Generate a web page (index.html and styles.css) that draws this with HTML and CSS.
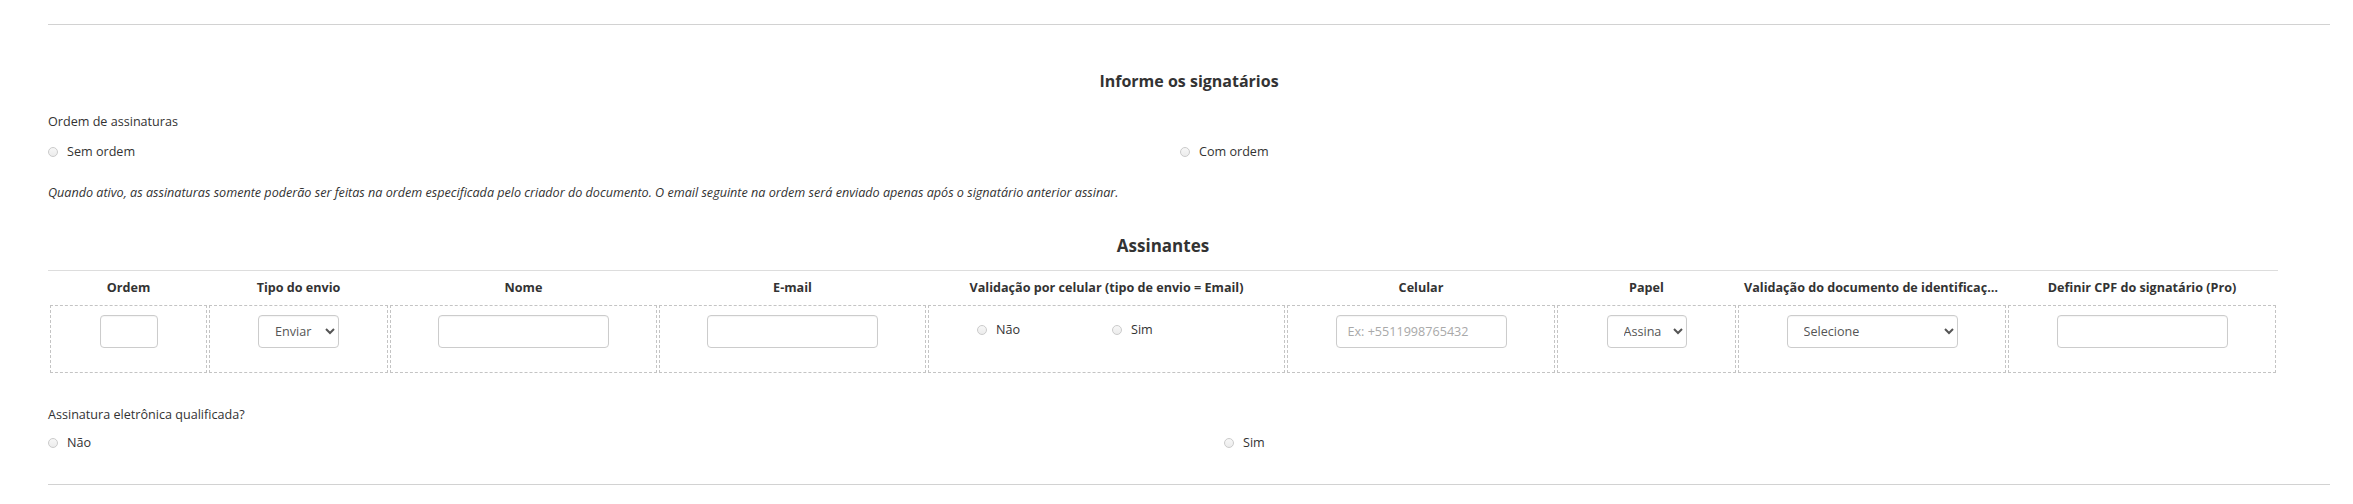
FILE: index.html
```html
<!DOCTYPE html>
<html lang="pt-BR">
<head>
<meta charset="utf-8">
<title>Informe os signatários</title>
<link rel="stylesheet" href="styles.css">
</head>
<body>
<div class="page">
  <div class="rule"></div>
  <h2 class="title">Informe os signatários</h2>
  <div class="field-label">Ordem de assinaturas</div>
  <div class="radio-row order-row">
    <label class="radio"><input type="radio" name="ordem"><span>Sem ordem</span></label>
    <label class="radio"><input type="radio" name="ordem"><span>Com ordem</span></label>
  </div>
  <p class="note">Quando ativo, as assinaturas somente poderão ser feitas na ordem especificada pelo criador do documento. O email seguinte na ordem será enviado apenas após o signatário anterior assinar.</p>

  <section class="signers">
    <h3 class="subtitle">Assinantes</h3>
    <div class="table-wrap">
      <table class="signers-table">
        <thead>
          <tr>
            <th class="c-ordem">Ordem</th>
            <th class="c-tipo">Tipo do envio</th>
            <th class="c-nome">Nome</th>
            <th class="c-email">E-mail</th>
            <th class="c-valid">Validação por celular (tipo de envio = Email)</th>
            <th class="c-cel">Celular</th>
            <th class="c-papel">Papel</th>
            <th class="c-doc">Validação do documento de identificação</th>
            <th class="c-cpf">Definir CPF do signatário (Pro)</th>
          </tr>
        </thead>
        <tbody>
          <tr>
            <td><div class="form-group"><input class="control w-ordem" type="text"></div></td>
            <td><div class="form-group"><select class="control w-tipo"><option>Enviar</option></select></div></td>
            <td><div class="form-group"><input class="control w-std" type="text"></div></td>
            <td><div class="form-group"><input class="control w-std" type="email"></div></td>
            <td class="valid-cell">
              <div class="radio-pair">
                <label class="radio pair-first"><input type="radio" name="cel"><span>Não</span></label>
                <label class="radio"><input type="radio" name="cel"><span>Sim</span></label>
              </div>
            </td>
            <td><div class="form-group"><input class="control w-std" type="text" placeholder="Ex: +5511998765432"></div></td>
            <td><div class="form-group"><select class="control w-papel"><option>Assinar</option></select></div></td>
            <td><div class="form-group"><select class="control w-std"><option>Selecione</option></select></div></td>
            <td><div class="form-group"><input class="control w-std" type="text"></div></td>
          </tr>
        </tbody>
      </table>
    </div>
  </section>

  <div class="field-label qual-label">Assinatura eletrônica qualificada?</div>
  <div class="radio-row qual-row">
    <label class="radio"><input type="radio" name="qual"><span>Não</span></label>
    <label class="radio"><input type="radio" name="qual"><span>Sim</span></label>
  </div>
  <div class="rule bottom-rule"></div>
</div>
</body>
</html>
```

FILE: styles.css
```css
html, body {
  margin: 0;
  padding: 0;
  background: #ffffff;
}

body {
  font-family: "Open Sans", "Liberation Sans", sans-serif;
  font-size: 12.6px;
  line-height: 18px;
  color: #333333;
}

.page {
  width: 2282px;
  padding: 24px 0 0 48px;
}

.rule {
  height: 1px;
  background: #d2d2d2;
}

.title {
  margin: 45px 0 0;
  font-size: 16px;
  line-height: 22px;
  font-weight: 700;
  text-align: center;
  color: #333333;
}

.field-label {
  margin-top: 21px;
}

.radio-row {
  display: flex;
  margin-top: 12px;
  height: 18px;
}

.order-row .radio:first-child {
  width: 1132px;
}

.qual-label {
  margin-top: 31px;
}

.qual-row {
  margin-top: 10px;
}

.qual-row .radio:first-child {
  width: 1176px;
}

.radio {
  display: flex;
  align-items: center;
  gap: 9px;
  height: 18px;
}

.radio input {
  appearance: none;
  -webkit-appearance: none;
  width: 10px;
  height: 10px;
  margin: 0;
  border: 1px solid #cbcbcb;
  border-radius: 50%;
  background: linear-gradient(#f7f7f7, #ececec);
  box-sizing: border-box;
  flex: none;
}

.note {
  margin: 23px 0 0;
  font-style: italic;
}

.signers {
  width: 2230px;
  margin-top: 32px;
}

.subtitle {
  margin: 0;
  font-size: 17px;
  line-height: 24px;
  font-weight: 700;
  text-align: center;
  color: #333333;
}

.table-wrap {
  margin-top: 12px;
  border-top: 1px solid #dddddd;
}

.signers-table {
  width: 2230px;
  table-layout: fixed;
  border-collapse: separate;
  border-spacing: 2px;
}

.signers-table th {
  box-sizing: border-box;
  height: 30px;
  padding: 6px 6px;
  font-weight: 700;
  text-align: center;
  white-space: nowrap;
  overflow: hidden;
  text-overflow: ellipsis;
  color: #333333;
}

.c-ordem { width: 157px; }
.c-tipo { width: 179px; }
.c-nome { width: 267px; }
.c-email { width: 267px; }
.c-valid { width: 357px; }
.c-cel { width: 268px; }
.c-papel { width: 179px; }
.c-doc { width: 268px; }
.c-cpf { width: 268px; }

.signers-table td {
  box-sizing: border-box;
  height: 66px;
  padding: 9px 8px;
  border: 1px dashed #c4c4c4;
  text-align: center;
  vertical-align: top;
}

.form-group {
  margin-bottom: 15px;
  display: flex;
  justify-content: center;
}

.control {
  box-sizing: border-box;
  height: 33px;
  margin: 0;
  padding: 5px 11px;
  border: 1px solid #cccccc;
  border-radius: 4px;
  background: #ffffff;
  font-family: "Open Sans", "Liberation Sans", sans-serif;
  font-size: 12.6px;
  color: #555555;
  box-shadow: inset 0 1px 1px rgba(0, 0, 0, 0.04);
}

select.control {
  padding: 5px 6px 5px 12px;
}

select.w-papel {
  padding-right: 9px;
}

.control::placeholder {
  color: #a9a9a9;
}

.w-ordem { width: 58px; }
.w-tipo { width: 81px; }
.w-papel { width: 80px; }
.w-std { width: 171px; }

.valid-cell {
  text-align: left;
}

.radio-pair {
  display: flex;
  margin-top: 6px;
  padding-left: 40px;
}

.pair-first {
  width: 135px;
}

.bottom-rule {
  margin-top: 32px;
}
```
